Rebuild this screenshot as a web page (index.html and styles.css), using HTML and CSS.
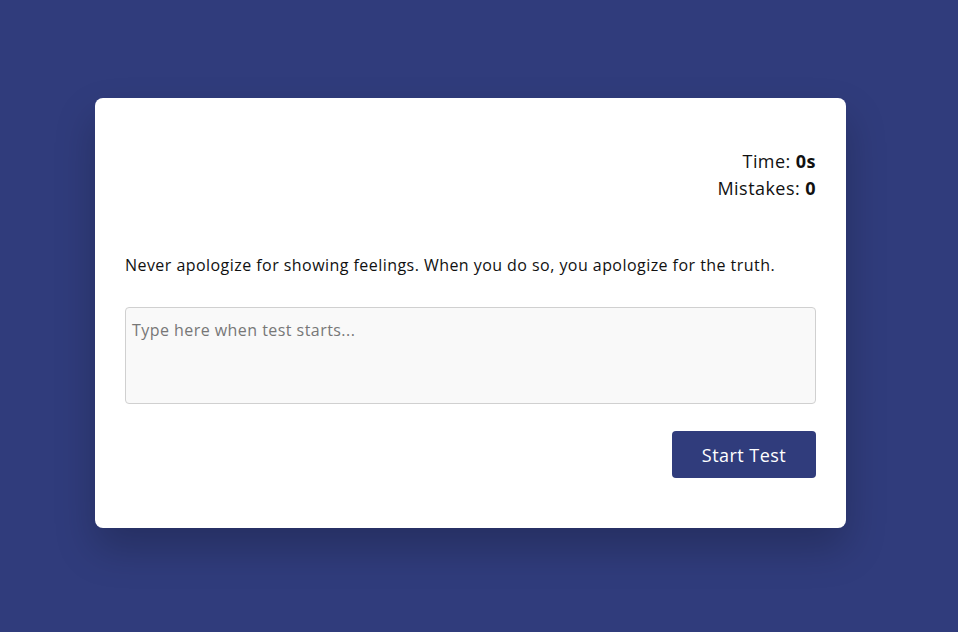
FILE: index.html
```html
<!DOCTYPE html>
<html lang="en">
<head>
<meta charset="utf-8">
<title>Typing Test</title>
<link rel="stylesheet" href="styles.css">
</head>
<body>
<main class="page">
  <section class="card">
    <div class="stats">
      <div>Time: <b>0s</b></div>
      <div>Mistakes: <b>0</b></div>
    </div>
    <p class="quote">Never apologize for showing feelings. When you do so, you apologize for the truth.</p>
    <textarea class="input" placeholder="Type here when test starts..." disabled></textarea>
    <div class="actions">
      <button class="btn">Start Test</button>
    </div>
  </section>
</main>
</body>
</html>
```

FILE: styles.css
```css
* { box-sizing: border-box; }
html, body {
  margin: 0;
  height: 100%;
}
body {
  background: #303c7c;
  font-family: "Open Sans", "DejaVu Sans", sans-serif;
  color: #111;
  letter-spacing: 0.45px;
}
.page {
  height: 632px;
  padding-right: 17px;
  display: flex;
  align-items: flex-start;
  justify-content: center;
  padding-top: 98px;
}
.card {
  width: 751px;
  height: 430px;
  background: #fff;
  border-radius: 8px;
  padding: 50px 30px 50px;
  box-shadow: 0 20px 40px rgba(0, 0, 0, 0.22);
  display: flex;
  flex-direction: column;
}
.stats {
  text-align: right;
  font-size: 18px;
  line-height: 27px;
}
.stats b { font-weight: 700; }
.quote {
  margin: 51px 0 0;
  font-size: 16px;
  line-height: 24px;
}
.input {
  margin-top: 30px;
  width: 100%;
  height: 97px;
  resize: none;
  background: #f9f9f9;
  border: 1px solid #d0d0d0;
  border-radius: 4px;
  padding: 10px 6px;
  font-family: inherit;
  letter-spacing: inherit;
  font-size: 16px;
  line-height: 24px;
}
.input::placeholder { color: #777; }
.actions {
  margin-top: 27px;
  display: flex;
  justify-content: flex-end;
}
.btn {
  width: 144px;
  height: 47px;
  background: #303c7c;
  color: #fff;
  border: none;
  border-radius: 4px;
  font-family: inherit;
  letter-spacing: inherit;
  font-size: 18px;
  font-weight: 500;
}
```
